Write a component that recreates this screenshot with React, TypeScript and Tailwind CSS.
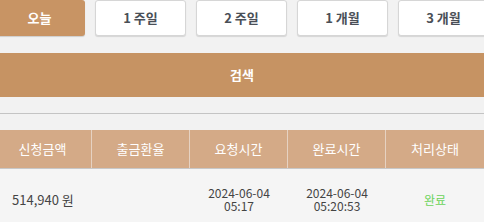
const periods = ["오늘", "1 주일", "2 주일", "1 개월", "3 개월"];
const cols = ["신청금액", "출금환율", "요청시간", "완료시간", "처리상태"];

export default function App() {
  return (
    <div className="w-[484px] h-[222px] overflow-hidden bg-[#f2f2f2] font-['Noto_Sans_CJK_KR','Noto_Sans',sans-serif]">
      <div className="ml-[-6px] w-[496px]">
        <div className="flex gap-[10px] h-[37px]">
          {periods.map((p, i) => (
            <button
              key={p}
              className={
                i === 0
                  ? "w-[91px] h-[36px] rounded-[3px] bg-[#c89464] text-white text-[13px] font-bold shadow-[0_1px_1px_rgba(0,0,0,0.15)]"
                  : "w-[91px] h-[36px] rounded-[3px] bg-white border border-[#d6d6d6] text-[#4a4f57] text-[13px] font-bold shadow-[0_1px_1px_rgba(0,0,0,0.12)]"
              }
            >
              {p}
            </button>
          ))}
        </div>
        <div className="mt-[16px] h-[44px] bg-[#c69363] flex items-center justify-center text-white text-[13px] font-bold">
          검색
        </div>
        <div className="mt-[16px] h-px bg-[#c4c4c4]" />
        <div className="mt-[16px] grid grid-cols-5 w-[490px] h-[39px] bg-[#d4aa87] border-b border-[#c8c8c8]">
          {cols.map((c, i) => (
            <div
              key={c}
              className={
                "flex items-center justify-center text-white text-[13px] " +
                (i < 4 ? "border-r border-[#e6d2c2]" : "")
              }
            >
              {c}
            </div>
          ))}
        </div>
        <div className="grid grid-cols-5 w-[490px] h-[60px] bg-[#f5f5f5] text-[12px] text-[#444] leading-[13px]">
          <div className="flex items-center pl-[18px] text-[13px]">514,940 원</div>
          <div />
          <div className="flex flex-col items-center justify-center">
            <span>2024-06-04</span>
            <span>05:17</span>
          </div>
          <div className="flex flex-col items-center justify-center">
            <span>2024-06-04</span>
            <span>05:20:53</span>
          </div>
          <div className="flex items-center justify-center text-[#6cd35a]">완료</div>
        </div>
      </div>
    </div>
  );
}
